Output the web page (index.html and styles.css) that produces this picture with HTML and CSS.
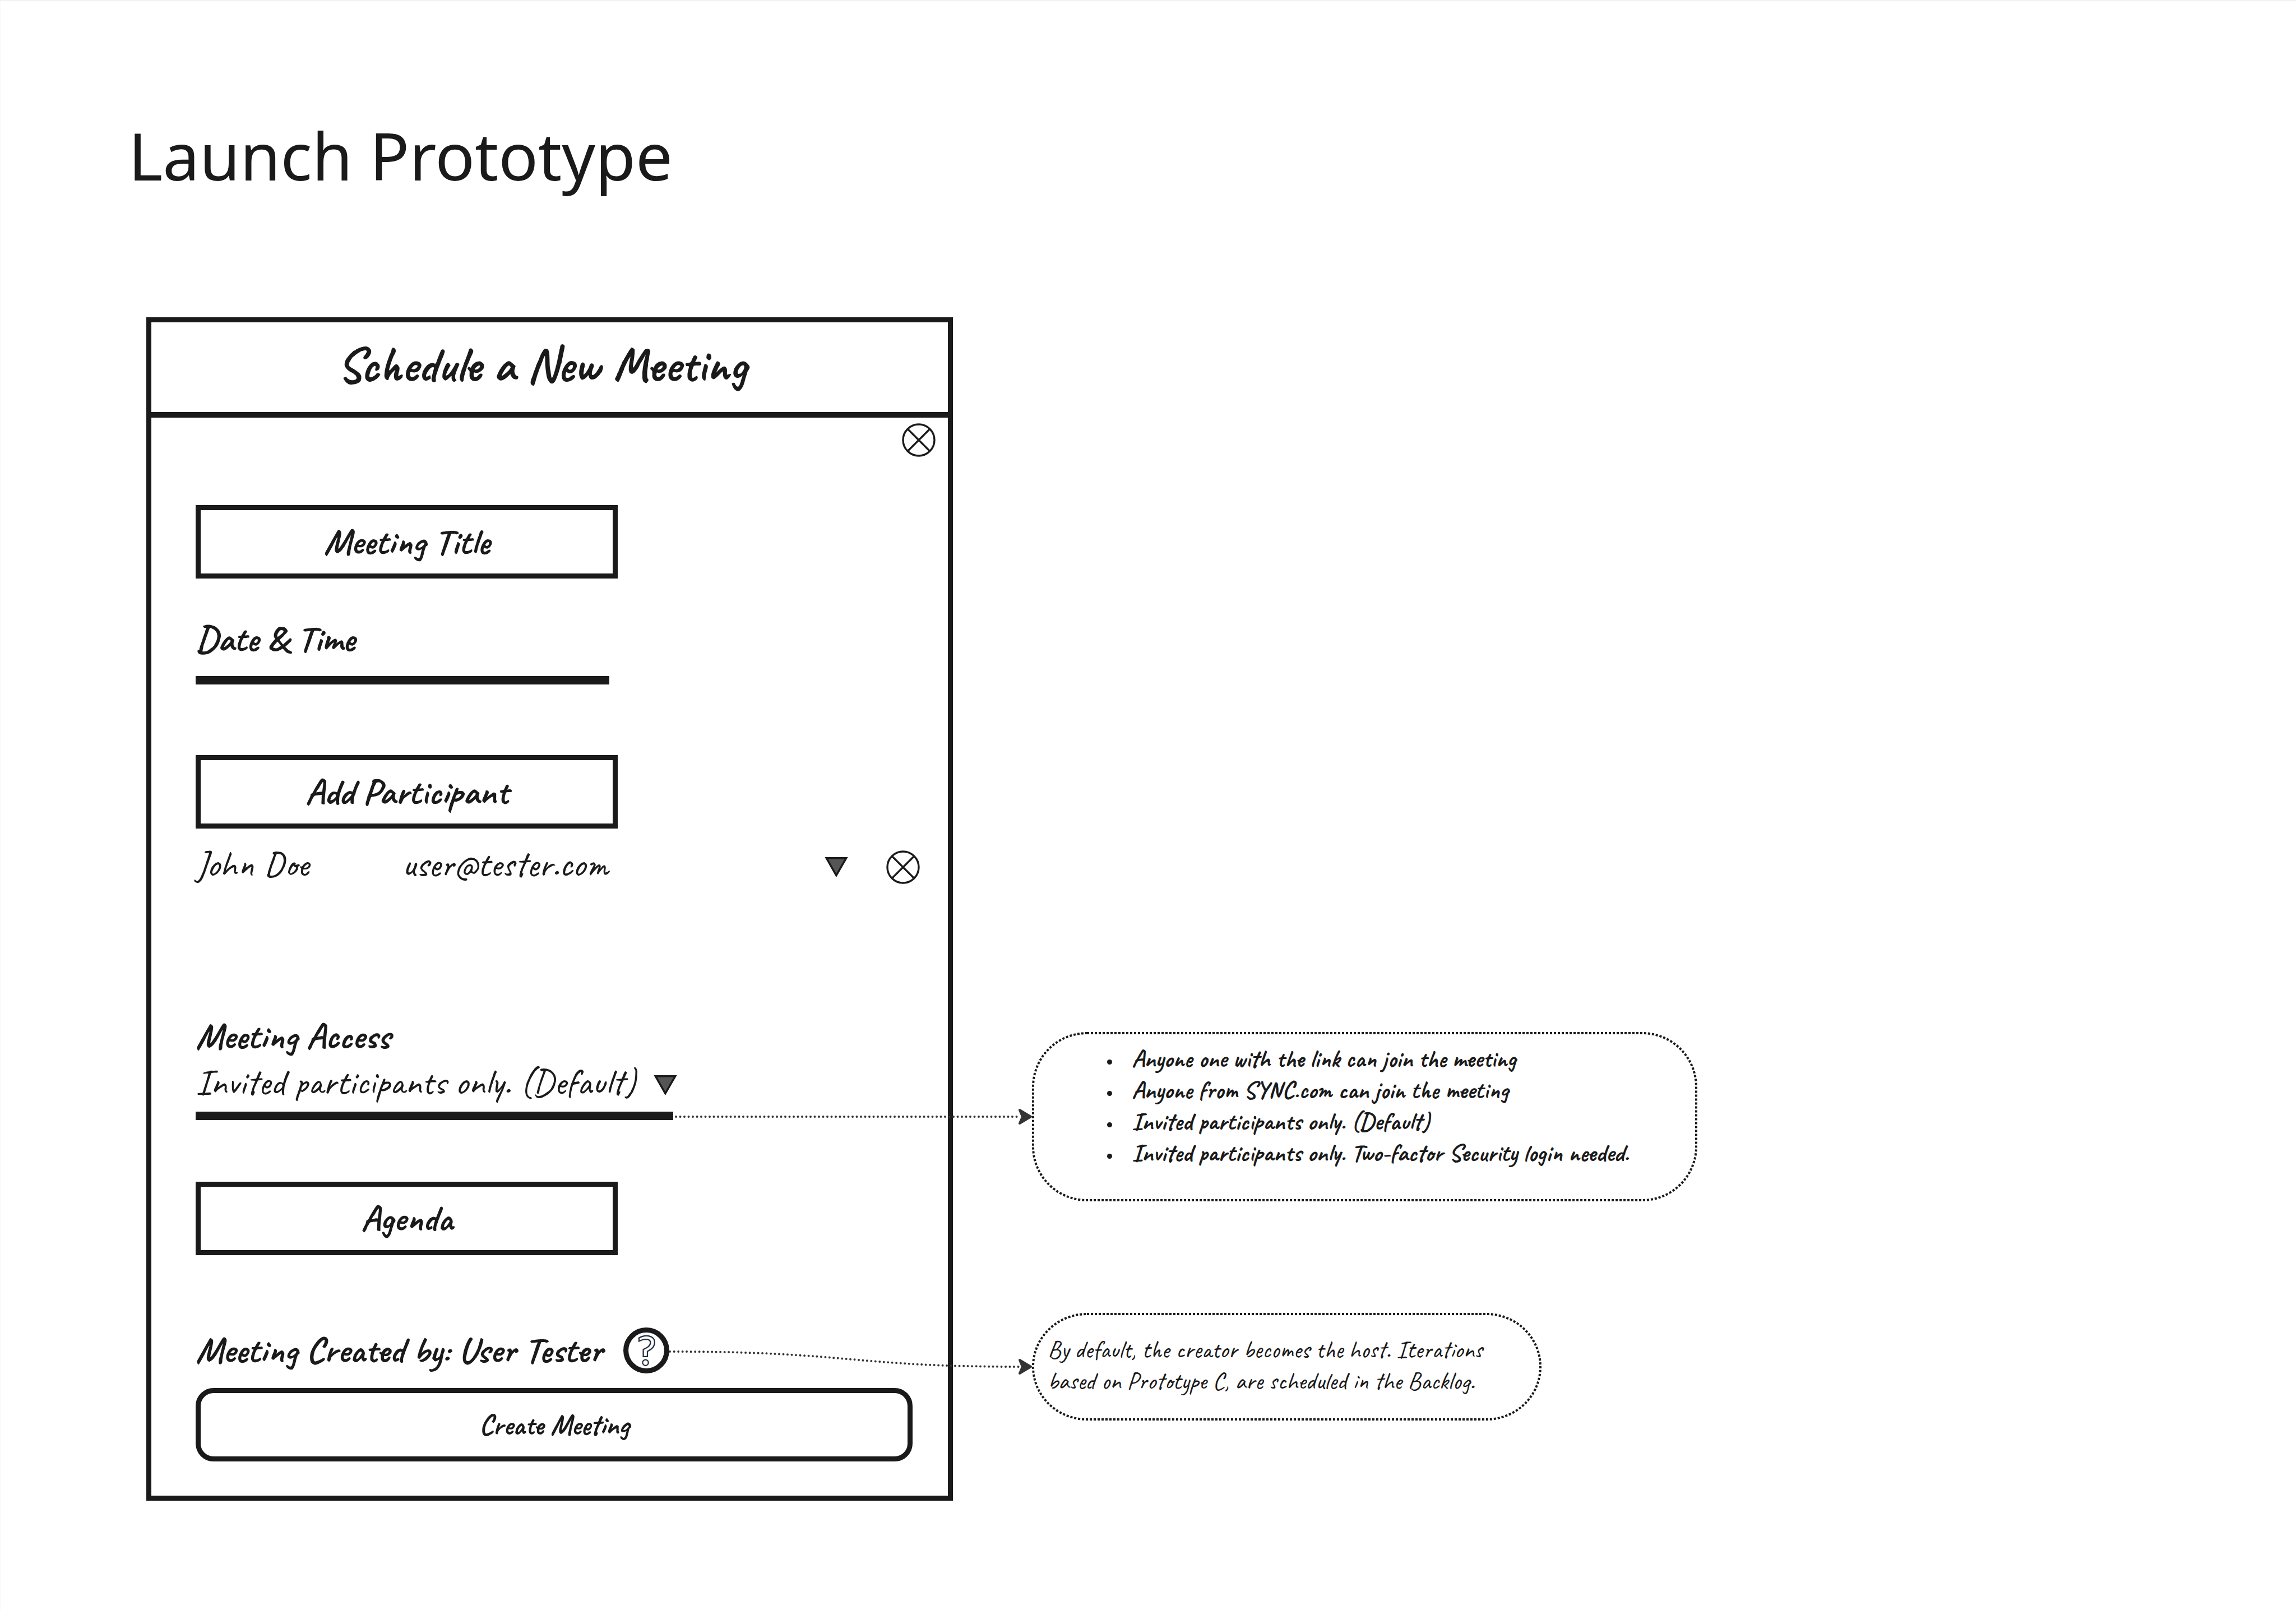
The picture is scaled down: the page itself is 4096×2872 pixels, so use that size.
FILE: index.html
```html
<!DOCTYPE html>
<html lang="en">
<head>
<meta charset="utf-8">
<title>Launch Prototype</title>
<link rel="stylesheet" href="styles.css">
</head>
<body>
<main class="page">
  <h1 class="page-title">Launch Prototype</h1>
  <div class="board">
    <section class="panel">
      <h2 class="panel-header">Schedule a New Meeting</h2>
      <form class="panel-body">
        <button class="icon-button panel-close" type="button" aria-label="Close">
          <svg class="close-icon" viewBox="0 0 210 210"><circle cx="105" cy="105" r="98"/><path d="M35 35 175 175M175 35 35 175"/></svg>
        </button>

        <input class="box meeting-title" type="text" placeholder="Meeting Title" aria-label="Meeting Title">

        <label class="label date-label" for="date-time">Date &amp; Time</label>
        <input class="line-input" id="date-time" type="text">

        <button class="box add-participant" type="button">Add Participant</button>
        <div class="participant">
          <span>John Doe</span>
          <span>user@tester.com</span>
          <div class="participant-tools">
            <button class="icon-button" type="button" aria-label="Participant options">
              <svg class="arrow-icon" viewBox="0 0 147 127"><path d="M11 6H136L73 115Z"/></svg>
            </button>
            <button class="icon-button" type="button" aria-label="Remove participant">
              <svg class="close-icon" viewBox="0 0 210 210"><circle cx="105" cy="105" r="98"/><path d="M35 35 175 175M175 35 35 175"/></svg>
            </button>
          </div>
        </div>

        <label class="label access-label" for="access">Meeting Access</label>
        <div class="access">
          <select class="access-select" id="access">
            <option>Invited participants only. (Default)</option>
            <option>Anyone one with the link can join the meeting</option>
            <option>Anyone from SYNC.com can join the meeting</option>
            <option>Invited participants only. Two-factor Security login needed.</option>
          </select>
          <svg class="arrow-icon access-arrow" viewBox="0 0 147 127"><path d="M11 6H136L73 115Z"/></svg>
        </div>

        <input class="box agenda" type="text" placeholder="Agenda" aria-label="Agenda">

        <div class="creator">
          <span class="label">Meeting Created by: User Tester</span>
          <button class="icon-button" type="button" aria-label="Help">
            <svg class="help-icon" viewBox="0 0 288 288">
              <circle class="help-ring" cx="144" cy="144" r="128"/>
              <path d="M98 66Q120 52 144 52C176 52 196 68 196 93C196 124 175 136 151 150V182H125V138C150 126 170 116 170 95C170 80 160 74 140 74Q122 74 99 86Z"/>
              <circle cx="139" cy="220" r="18"/>
            </svg>
          </button>
        </div>
        <button class="box create" type="submit">Create Meeting</button>
      </form>
    </section>

    <div class="notes">
      <aside class="note access-note">
        <svg class="note-outline"><rect/></svg>
        <svg class="connector access-connector" viewBox="0 0 640 68">
          <path class="connector-line" d="M5 34H618"/>
          <path class="connector-head" d="M638 34 618 22 623 34 618 46Z"/>
        </svg>
        <ul class="note-list">
          <li>Anyone one with the link can join the meeting</li>
          <li>Anyone from SYNC.com can join the meeting</li>
          <li>Invited participants only. (Default)</li>
          <li>Invited participants only. Two-factor Security login needed.</li>
        </ul>
      </aside>
      <aside class="note creator-note">
        <svg class="note-outline"><rect/></svg>
        <svg class="connector creator-connector" viewBox="0 0 648 68">
          <path class="connector-line" d="M2 7C324 7 324 34 626 34"/>
          <path class="connector-head" d="M646 34 626 22 631 34 626 46Z"/>
        </svg>
        <p class="note-text">By default, the creator becomes the host. Iterations<br>based on Prototype C, are scheduled in the Backlog.</p>
      </aside>
    </div>
  </div>
</main>
</body>
</html>
```
FILE: styles.css
```css
:root {
  --ink: #1a1a1a;
  --hand: Caveat, "Liberation Serif", cursive;
}

* {
  box-sizing: border-box;
}

body {
  margin: 0;
  background: #fff;
  color: var(--ink);
  font: 400 66px/82px var(--hand);
}

h1, h2, p, ul {
  margin: 0;
  padding: 0;
}

button, input, select {
  margin: 0;
  padding: 0;
  border: 0;
  border-radius: 0;
  background: none;
  color: inherit;
  font: inherit;
}

svg {
  display: block;
}

.page {
  min-height: 100vh;
  padding: 195px 0 0 228px;
  border-top: 2px solid #eef3f6;
  border-left: 1px solid #f4f7f9;
}

.page-title {
  font: 400 117px/160px "Noto Sans", sans-serif;
}

.board {
  display: grid;
  grid-template-columns: 1439fr 141fr 1187fr 1068fr;
  align-items: start;
  margin: 209px 0 0 32px;
}

/* Meeting form */

.panel {
  border: 9px solid var(--ink);
}

.panel-header {
  padding: 0 28px 8px 0;
  border-bottom: 10px solid var(--ink);
  font-size: 88px;
  font-weight: 700;
  line-height: 152px;
  text-align: center;
}

.panel-body {
  display: flex;
  flex-direction: column;
  align-items: flex-start;
  padding: 10px 22px 61px 79px;
}

.label {
  font-weight: 700;
}

.icon-button {
  display: block;
  line-height: 0;
}

.panel-close {
  align-self: flex-end;
}

.close-icon {
  width: 60px;
  height: 60px;
  fill: none;
  stroke: var(--ink);
  stroke-width: 12;
}

.arrow-icon {
  width: 42px;
  height: 36px;
  fill: #555;
  stroke: var(--ink);
  stroke-width: 12;
}

.box {
  width: 753px;
  height: 131px;
  border: 9px solid var(--ink);
  font-weight: 700;
  text-align: center;
}

.box::placeholder {
  color: inherit;
  opacity: 1;
}

.meeting-title {
  margin-top: 86px;
}

.date-label {
  margin-top: 67px;
}

.line-input {
  width: 738px;
  height: 40px;
  border-bottom: 15px solid var(--ink);
}

.add-participant {
  margin-top: 126px;
}

.participant {
  display: grid;
  grid-template-columns: 368px 1fr auto;
  align-self: stretch;
  margin-top: 23px;
  padding-right: 28px;
}

.participant-tools {
  display: flex;
  align-items: center;
  gap: 68px;
  padding-top: 10px;
}

.access-label {
  margin-top: 225px;
}

.access {
  position: relative;
  width: 852px;
  padding-bottom: 11px;
  border-bottom: 15px solid var(--ink);
}

.access-select {
  display: block;
  width: 100%;
  height: 82px;
  appearance: none;
}

.access-arrow {
  position: absolute;
  top: 28px;
  left: 817px;
  pointer-events: none;
}

.agenda {
  margin-top: 110px;
}

.creator {
  display: flex;
  align-items: center;
  gap: 38px;
  margin-top: 129px;
}

.help-icon {
  width: 82px;
  height: 82px;
  fill: none;
  stroke: #232f3e;
  stroke-width: 8;
}

.help-ring {
  stroke: var(--ink);
  stroke-width: 32;
}

.create {
  align-self: stretch;
  width: auto;
  margin: 26px 41px 0 0;
  border-radius: 32px;
  font-size: 51px;
}

/* Annotations beside the form */

.notes {
  grid-column: 3;
  display: grid;
  gap: 199px;
  padding-top: 1275px;
  font-size: 44px;
  line-height: 56px;
}

.note {
  position: relative;
}

.note-outline {
  position: absolute;
  inset: 0;
  width: 100%;
  height: 100%;
}

.note-outline rect {
  x: 2px;
  y: 2px;
  width: calc(100% - 4px);
  height: calc(100% - 4px);
  rx: 96px;
  fill: none;
  stroke: var(--ink);
  stroke-width: 4px;
  stroke-dasharray: 4 3;
}

.access-note {
  padding: 20px 40px 58px 134px;
  font-weight: 700;
}

.creator-note {
  width: 909px;
  padding: 38px 28px 42px;
}

.note-list {
  list-style: none;
}

.note-list li {
  display: flex;
  gap: 35px;
}

.note-list li::before {
  content: "";
  flex: none;
  width: 9px;
  height: 9px;
  margin-top: 29px;
  border-radius: 50%;
  background: var(--ink);
}

.connector {
  position: absolute;
  top: 50%;
  right: 100%;
  height: 68px;
  margin-top: -34px;
}

.access-connector {
  width: 640px;
}

.creator-connector {
  width: 648px;
}

.connector-line {
  fill: none;
  stroke: #333;
  stroke-width: 4;
  stroke-linecap: round;
  stroke-dasharray: 0 7.5;
}

.connector-head {
  fill: #333;
  stroke: #333;
  stroke-width: 4;
  stroke-linejoin: round;
}
```
